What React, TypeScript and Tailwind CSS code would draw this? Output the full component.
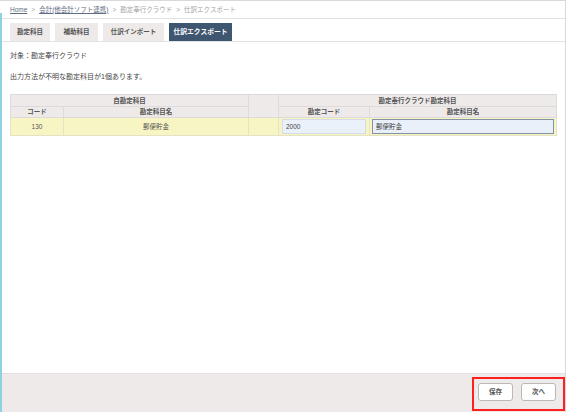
import React from "react";

export default function App() {
  const font = "font-['Liberation_Sans','Noto_Sans_CJK_JP',sans-serif]";
  return (
    <div className={`relative w-[567px] h-[412px] bg-white overflow-hidden ${font}`}>
      {/* window frame edge */}
      <div className="absolute left-0 top-[13px] bottom-0 w-[2px] bg-[#8fd0e2]" />
      <div className="w-[566px] h-full flex flex-col border-t border-r border-[#d9d9d9]">
        {/* breadcrumb */}
        <div className="h-[18px] shrink-0 border-b border-[#e2e2e2] px-[10px] flex items-center gap-[4px] text-[6.5px] text-[#a3a3a3]">
          <span className="text-[#5f6d82] underline">Home</span>
          <span>&gt;</span>
          <span className="text-[#5f6d82] underline">会計(他会計ソフト連携)</span>
          <span>&gt;</span>
          <span>勘定奉行クラウド</span>
          <span>&gt;</span>
          <span>仕訳エクスポート</span>
        </div>
        {/* tabs */}
        <div className="shrink-0 pt-[4px] px-[10px] flex gap-[5px] border-b border-[#e2e2e2]">
          <div className="w-[40px] h-[18px] flex items-center justify-center bg-[#eeeae9] text-[#555] text-[6.5px] font-bold">勘定科目</div>
          <div className="w-[43px] h-[18px] flex items-center justify-center bg-[#eeeae9] text-[#555] text-[6.5px] font-bold">補助科目</div>
          <div className="w-[61px] h-[18px] flex items-center justify-center bg-[#eeeae9] text-[#555] text-[6.5px] font-bold">仕訳インポート</div>
          <div className="w-[63px] h-[18px] flex items-center justify-center bg-[#3e5670] text-white text-[6.8px] font-bold">仕訳エクスポート</div>
        </div>
        {/* content */}
        <div className="flex-1 px-[10px] text-[#444]">
          <div className="mt-[9px] text-[7px] leading-[10px]">対象：勘定奉行クラウド</div>
          <div className="mt-[11px] text-[7px] leading-[10px]">出力方法が不明な勘定科目が1個あります。</div>
          <table className="mt-[12px] w-[546px] table-fixed border-collapse text-[6.5px] text-[#555]">
            <colgroup>
              <col className="w-[53px]" />
              <col className="w-[185px]" />
              <col className="w-[30px]" />
              <col className="w-[91px]" />
              <col className="w-[187px]" />
            </colgroup>
            <thead>
              <tr className="h-[12px]">
                <th colSpan={2} className="border border-[#dedad9] bg-[#eeeae9] font-bold p-0">自勘定科目</th>
                <th rowSpan={2} className="border border-[#dedad9] bg-[#eeeae9] p-0"></th>
                <th colSpan={2} className="border border-[#dedad9] bg-[#eeeae9] font-bold p-0">勘定奉行クラウド勘定科目</th>
              </tr>
              <tr className="h-[11px]">
                <th className="border border-[#dedad9] bg-[#eeeae9] font-bold p-0">コード</th>
                <th className="border border-[#dedad9] bg-[#eeeae9] font-bold p-0">勘定科目名</th>
                <th className="border border-[#dedad9] bg-[#eeeae9] font-bold p-0">勘定コード</th>
                <th className="border border-[#dedad9] bg-[#eeeae9] font-bold p-0">勘定科目名</th>
              </tr>
            </thead>
            <tbody>
              <tr className="h-[18px] bg-[#f8f5c4]">
                <td className="border border-[#e6e3c4] text-center p-0">130</td>
                <td className="border border-[#e6e3c4] text-center p-0">郵便貯金</td>
                <td className="border border-[#e6e3c4] p-0"></td>
                <td className="border border-[#e6e3c4] px-[3px] py-0">
                  <div className="h-[15px] bg-[#eaf1fb] border border-[#d5dce6] flex items-center px-[3px] text-[#444]">2000</div>
                </td>
                <td className="border border-[#e6e3c4] px-[2px] py-0">
                  <div className="h-[15px] bg-[#e9f0fa] border border-[#8592a6] flex items-center px-[3px] text-[#444]">郵便貯金</div>
                </td>
              </tr>
            </tbody>
          </table>
        </div>
        {/* footer */}
        <div className="h-[39px] shrink-0 bg-[#eeeaea] border-t border-[#e4e0e0] flex justify-end items-start pt-[3px]">
          <div className="h-[34px] border-2 border-[#ff1f1f] pl-[4px] pr-[7px] pt-[4px] flex gap-[8px]">
            <button className="w-[35px] h-[18px] bg-white border border-[#b9b9b9] rounded-[3px] text-[6.5px] text-[#555] font-bold">保存</button>
            <button className="w-[35px] h-[18px] bg-white border border-[#b9b9b9] rounded-[3px] text-[6.5px] text-[#555] font-bold">次へ</button>
          </div>
        </div>
      </div>
    </div>
  );
}
